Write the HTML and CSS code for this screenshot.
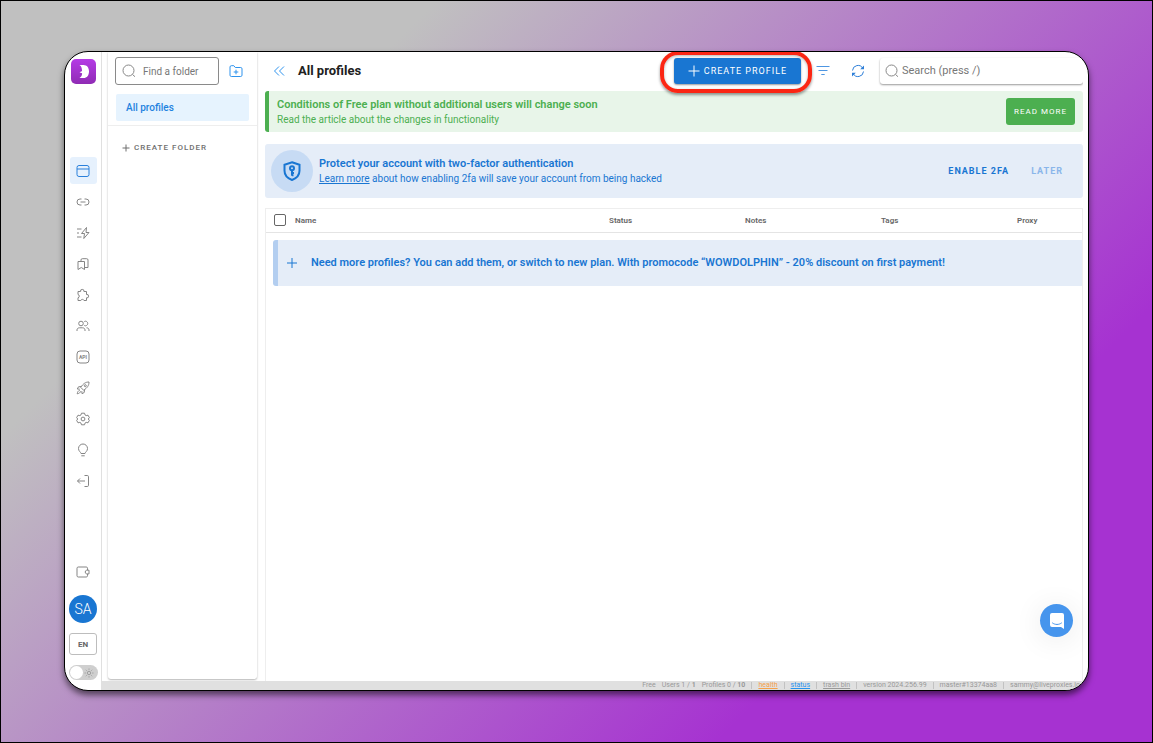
FILE: index.html
```html
<!DOCTYPE html>
<html lang="en">
<head>
<meta charset="utf-8">
<title>All profiles</title>
<link rel="stylesheet" href="styles.css">
</head>
<body>
<div class="backdrop">
<div class="window">
  <aside class="rail">
    <svg class="logo" viewBox="0 0 25 25" aria-label="Dolphin"><defs><linearGradient id="lg" x1="0" y1="0" x2="0" y2="1"><stop offset="0" stop-color="#b53be6"/><stop offset="1" stop-color="#8f2bb4"/></linearGradient></defs><rect width="25" height="25" rx="5" fill="url(#lg)"/><path d="M8.500 6h4c3.500 0 5.500 2.800 5.500 6.400S16 19 12.500 19H8.500c1.800-1 2.600-2.700 2.600-4.700-1.200-.3-2-.7-2.600-1.300 1 0 1.900-.4 2.500-.9.100-2.700-.6-4.800-2.500-6.100z" fill="#fff"/></svg>
    <nav class="nav">
      <a href="#" class="item active" aria-label="Profiles"><svg viewBox="0 0 14 14"><rect x="1" y="1.500" width="12" height="11" rx="2"/><path d="M1 5h12"/></svg></a>
      <a href="#" class="item" aria-label="Proxies"><svg viewBox="0 0 14 14"><path d="M5.500 4H4a3 3 0 0 0 0 6h1.500M8.500 4H10a3 3 0 0 1 0 6H8.500M4.500 7h5"/></svg></a>
      <a href="#" class="item" aria-label="Automation"><svg viewBox="0 0 14 14"><path d="M1 3h4.500M1 7h2M1 11h4.500M10.500 1.500L5.500 7.500h3L7.800 12.500l5.200-6h-3z"/></svg></a>
      <a href="#" class="item" aria-label="Bookmarks"><svg viewBox="0 0 14 14"><path d="M2 4.500h6.500v8L5.300 10.500 2 12.500zM5 4.500V3a1.300 1.300 0 0 1 1.300-1.300h4.400A1.300 1.300 0 0 1 12 3v7.500H8.500"/></svg></a>
      <a href="#" class="item" aria-label="Extensions"><svg viewBox="0 0 14 14"><path d="M2 3.500h2.600a1.700 1.700 0 1 1 3.300 0h2.600v3a1.700 1.700 0 1 1 0 3.300v2.700H8a1.700 1.700 0 0 0-3.200 0H2V9.800a1.700 1.700 0 0 0 0-3.300z"/></svg></a>
      <a href="#" class="item" aria-label="Team"><svg viewBox="0 0 14 14"><circle cx="5" cy="4.500" r="2.300"/><path d="M8.300 2.500a2.300 2.300 0 1 1 0 4M1 12v-1c0-1.300 1-2.200 2.400-2.200h3.200C8 8.800 9 9.700 9 11v1M10.500 8.800c1.600 0 2.500.9 2.500 2.200v1"/></svg></a>
      <a href="#" class="item" aria-label="API"><svg viewBox="0 0 14 14"><rect x="1" y="1" width="12" height="12" rx="3"/><text class="api" x="7" y="8.700" text-anchor="middle">API</text></svg></a>
      <a href="#" class="item" aria-label="Launch"><svg viewBox="0 0 14 14"><path d="M13 1c-3.500 0-5.500 1.500-8.300 5.300L7.700 9.300C11.500 6.500 13 4.500 13 1zM5.200 5.500l-2.700.3L1.300 8l2.500.2M8.500 8.800l-.3 2.700L6 12.700 5.800 10.200M3.700 9.500C2.300 9.500 1.500 11 1.200 12.800c1.800-.3 3.300-1.100 3.300-2.500"/><circle cx="9.300" cy="4.700" r="1"/></svg></a>
      <a href="#" class="item" aria-label="Settings"><svg viewBox="0 0 14 14"><circle cx="7" cy="7" r="1.900"/><path d="M5.500 1.200h3l.5 1.700 1.200.7 1.800-.4 1.400 2.500L12.200 7l1.200 1.300-1.400 2.500-1.800-.4-1.200.7-.5 1.700h-3L5 11.100l-1.200-.7-1.800.4L.6 8.300 1.800 7 .6 5.700 2 3.200l1.800.4L5 2.900z"/></svg></a>
      <a href="#" class="item" aria-label="Tips"><svg viewBox="0 0 14 14"><path d="M5 10.500C4.800 9 2.500 8.300 2.500 5.500a4.500 4.500 0 0 1 9 0C11.500 8.300 9.200 9 9 10.500zM5.300 12.800h3.400"/></svg></a>
      <a href="#" class="item" aria-label="Log out"><svg viewBox="0 0 14 14"><path d="M8.500 1.500h2.800A1.200 1.200 0 0 1 12.500 2.700v8.600a1.200 1.200 0 0 1-1.200 1.200H8.500M9 7H1.500M4 4.500L1.500 7 4 9.500"/></svg></a>
    </nav>
    <div class="account">
      <a href="#" class="item" aria-label="Wallet"><svg viewBox="0 0 14 14"><path d="M11.500 5V3.200c0-.7-.5-1.200-1.200-1.200H2.200C1.500 2 1 2.500 1 3.200v7.600c0 .7.500 1.200 1.200 1.200h8.100c.7 0 1.200-.5 1.200-1.200V9M13 5.200h-2.300a1.900 1.900 0 0 0 0 3.700H13z"/></svg></a>
      <button class="avatar">SA</button>
      <button class="lang">EN</button>
      <label class="switch"><input type="checkbox" aria-label="Dark theme"><span class="knob"></span><svg viewBox="0 0 10 10"><circle cx="5" cy="5" r="1.700"/><path d="M5 .5v1.300M5 8.200v1.300M.5 5h1.300M8.200 5h1.300M1.800 1.800l.9.900M7.300 7.300l.9.900M1.800 8.200l.9-.9M7.300 2.700l.9-.9"/></svg></label>
    </div>
  </aside>
  <div class="page">
    <div class="columns">
      <section class="folders">
        <div class="finder">
          <label class="find"><svg viewBox="0 0 14 14"><circle cx="6.500" cy="6.500" r="5.500"/><path d="M10.500 10.500L13 12.700"/></svg><input type="text" placeholder="Find a folder" aria-label="Find a folder"></label>
          <button class="ghost" aria-label="New folder"><svg viewBox="0 0 14 14"><path d="M1 3c0-.8.500-1.300 1.300-1.300h2.500L6.300 3.500h5.400c.8 0 1.300.5 1.300 1.300v6.400c0 .8-.5 1.300-1.300 1.300H2.300C1.500 12.500 1 12 1 11.200zM7 5.700v4.600M4.700 8h4.600"/></svg></button>
        </div>
        <a href="#" class="folder">All profiles</a>
        <button class="newfolder"><svg viewBox="0 0 8 8"><path d="M4 .5v7M.5 4h7"/></svg>CREATE FOLDER</button>
      </section>
      <main class="main">
        <header class="top">
          <button class="ghost back" aria-label="Collapse folders"><svg viewBox="0 0 12 12"><path d="M6 1.500L1.500 6 6 10.500M11 1.500L6.500 6l4.500 4.500"/></svg></button>
          <h1>All profiles</h1>
          <div class="create-wrap"><button class="create"><svg viewBox="0 0 12 12"><path d="M6 .5v11M.5 6h11"/></svg>CREATE PROFILE</button><span class="marker"></span></div>
          <button class="ghost filter" aria-label="Filter"><svg viewBox="0 0 14 14"><path d="M.5 2.500h13M2.500 6.500h9M5.300 10.500h3.400"/></svg></button>
          <button class="ghost refresh" aria-label="Refresh"><svg viewBox="0 0 14 14"><path d="M1.500 6.500A5.500 5.500 0 0 1 11.800 4.300M12.500 7.500A5.500 5.500 0 0 1 2.200 9.700"/><path class="solid" d="M13 1.500v3.800H9.200zM1 12.500V8.700h3.800z"/></svg></button>
          <label class="search"><svg viewBox="0 0 14 14"><circle cx="6.500" cy="6.500" r="5.500"/><path d="M10.500 10.500L13 12.700"/></svg><input type="text" placeholder="Search (press /)" aria-label="Search"></label>
        </header>
        <div class="notice">
          <div class="copy"><strong>Conditions of Free plan without additional users will change soon</strong><p>Read the article about the changes in functionality</p></div>
          <button class="read">READ MORE</button>
        </div>
        <div class="protect">
          <span class="badge"><svg viewBox="0 0 20 20"><path d="M10 1.200l7.500 2.600v6c0 4.500-3 7.500-7.500 9.200-4.500-1.700-7.500-4.700-7.500-9.200v-6z"/><circle cx="10" cy="7.300" r="2"/><path d="M10 9.300v5.500M10 12h2M10 14.300h1.500"/></svg></span>
          <div class="copy"><strong>Protect your account with two-factor authentication</strong><p><a href="#">Learn more</a> about how enabling 2fa will save your account from being hacked</p></div>
          <button class="text">ENABLE 2FA</button>
          <button class="text later">LATER</button>
        </div>
        <div class="list">
          <table>
            <thead><tr><th class="name"><label><input type="checkbox">Name</label></th><th>Status</th><th>Notes</th><th>Tags</th><th class="last">Proxy</th></tr></thead>
          </table>
          <a href="#" class="promo"><svg viewBox="0 0 12 12"><path d="M6 1v10M1 6h10"/></svg>Need more profiles? You can add them, or switch to new plan. With promocode “WOWDOLPHIN” - 20% discount on first payment!</a>
        </div>
      </main>
    </div>
    <footer class="status">
      <span>Free</span><span>Users 1 / <b>1</b></span><span>Profiles 0 / <b>10</b></span><i></i>
      <a href="#" class="health">health</a><i></i><a href="#" class="online">status</a><i></i><a href="#">trash bin</a><i></i>
      <span>version 2024.256.99</span><i></i><span>master#13374aa8</span><i></i><span>sammy@liveproxies.io</span>
    </footer>
  </div>
  <button class="chat" aria-label="Open chat"><svg viewBox="0 0 16 18"><path class="bubble" d="M3 1h10a2 2 0 0 1 2 2v14l-3-2H3a2 2 0 0 1-2-2V3a2 2 0 0 1 2-2z"/><path class="smile" d="M3.500 11c2.500 2 6.500 2 9 0"/></svg></button>
</div>
</div>
</body>
</html>
```
FILE: styles.css
```css
* { box-sizing: border-box; }
body { margin: 0; font-family: Roboto, "Liberation Sans", sans-serif; color: #666; }
button, input { font: inherit; color: inherit; }
button { border: 0; background: none; padding: 0; cursor: pointer; }
a { color: inherit; }
p, h1 { margin: 0; }
svg { display: block; flex: none; fill: none; stroke: currentColor; stroke-width: 1; }

.backdrop { display: flex; min-height: 100vh; padding: 50px 63px 51px; border: 1px solid #000; background: linear-gradient(135deg, #c0c0c0 23%, #a632d1 77%); }
.window { position: relative; display: flex; flex: 1; min-width: 0; overflow: hidden; border: 1px solid #000; border-radius: 24px; background: #fff; box-shadow: 0 4px 6px rgba(0, 0, 0, .55); }

.rail { display: flex; flex-direction: column; align-items: center; flex: none; width: 37px; padding: 7px 0 10px; border-right: 1px solid #e0e0e0; }
.logo { width: 25px; height: 25px; stroke: none; }
.nav { display: flex; flex-direction: column; gap: 4px; margin-top: 73px; }
.item { display: grid; place-items: center; width: 27px; height: 27px; border-radius: 3px; color: #858585; }
.item svg { width: 14px; height: 14px; }
.item.active { background: #e6f1fd; color: #2a80db; }
.api { font-size: 5px; font-weight: 700; fill: currentColor; stroke: none; }
.account { display: flex; flex-direction: column; align-items: center; gap: 10px; margin-top: auto; }
.avatar { width: 28px; height: 28px; border-radius: 50%; background: #1976d2; color: #fff; font-size: 14px; font-weight: 300; }
.lang { width: 28px; height: 22px; border: 1px solid #bdbdbd; border-radius: 3px; font-size: 8px; font-weight: 700; }
.switch { display: flex; align-items: center; justify-content: space-between; width: 29px; height: 15px; padding: 0 4px 0 1px; border-radius: 8px; background: #cfcfcf; }
.switch input { position: absolute; opacity: 0; }
.knob { width: 13px; height: 13px; border-radius: 50%; background: #fff; }
.switch svg { width: 10px; height: 10px; color: #a0a0a0; }

.page { display: flex; flex: 1; flex-direction: column; min-width: 0; }
.columns { display: flex; flex: 1; gap: 8px; padding: 0 5px 0 6px; }
.folders { flex: none; width: 149px; margin-bottom: 2px; border-radius: 0 0 3px 3px; box-shadow: 0 1px 2px rgba(0, 0, 0, .3); }
.finder { display: flex; align-items: center; padding: 5px 14px 0 7px; justify-content: space-between; }
.find { display: flex; align-items: center; gap: 7px; width: 104px; height: 28px; padding: 0 6px; border: 1px solid #8a8a8a; border-radius: 3px; color: #858585; }
.find svg, .search svg { width: 14px; height: 14px; color: #888; }
.find input, .search input { flex: 1; width: 0; min-width: 0; padding: 0; border: 0; outline: 0; background: none; }
.find input { font-size: 10px; }
input::placeholder { color: #777; opacity: 1; }
.ghost { color: #2e93ed; }
.ghost svg { width: 14px; height: 14px; }
.folder { display: block; margin: 9px 8px 4px; padding: 0 10px; border-radius: 2px; background: #e6f3fe; color: #1e82e0; font-size: 10px; font-weight: 500; line-height: 27px; text-decoration: none; }
.newfolder { display: flex; align-items: center; gap: 4px; width: 100%; height: 44px; padding-left: 14px; border-top: 1px solid #eee; font-size: 8px; font-weight: 500; letter-spacing: 1px; color: #6f6f6f; }
.newfolder svg { width: 8px; height: 8px; }

.main { display: flex; flex: 1; flex-direction: column; min-width: 0; }
.top { display: flex; align-items: center; height: 39px; padding-bottom: 2px; }
.back { margin: 0 13px 0 8px; }
.ghost.back svg { width: 12px; height: 12px; }
h1 { flex: 1; color: #212121; font-size: 13px; font-weight: 700; line-height: 18px; }
.create-wrap { position: relative; }
.create { display: flex; align-items: center; justify-content: center; gap: 4px; width: 127px; height: 26px; border-radius: 3px; background: #1976d2; color: #fff; font-size: 9px; letter-spacing: 1px; box-shadow: 0 1px 2px rgba(0, 0, 0, .4); }
.create svg { width: 12px; height: 12px; }
.marker { position: absolute; inset: -7px -11px -9px -14px; border: 4px solid #fb2614; border-radius: 18px; box-shadow: 0 2px 3px rgba(0, 0, 0, .4), inset 0 1px 3px rgba(0, 0, 0, .3); pointer-events: none; }
.filter { margin-left: 15px; color: #4e96e2; }
.refresh { margin: 0 15px 0 21px; color: #2e7fd8; }
.solid { fill: currentColor; stroke: none; }
.search { display: flex; align-items: center; gap: 3px; width: 203px; height: 26px; padding: 0 6px 0 5px; border-radius: 3px; font-size: 11px; box-shadow: 0 1px 2px rgba(0, 0, 0, .4); clip-path: inset(-2px 0 -4px -4px); }

.copy { flex: 1; }
.copy strong, .promo { display: block; font-size: 11px; font-weight: 600; line-height: 15px; }
.copy p { font-size: 10px; line-height: 15px; }
.notice { display: flex; align-items: center; min-height: 41px; padding: 0 8px; border-left: 4px solid #4caf50; border-radius: 3px; background: #e8f5e9; color: #4caf50; }
.read { width: 69px; height: 27px; border-radius: 3px; background: #4caf50; color: #fff; font-size: 8px; letter-spacing: 1px; }
.protect { display: flex; align-items: center; min-height: 54px; margin-top: 12px; padding: 0 20px 0 6px; border-radius: 3px; background: #e5edf8; color: #1976d2; }
.badge { display: grid; place-items: center; width: 42px; height: 42px; margin-right: 6px; border-radius: 50%; background: #c7dbf4; }
.badge svg { width: 20px; height: 20px; stroke-width: 2; }
.text { margin-left: 22px; font-size: 9px; font-weight: 700; letter-spacing: 1px; }
.later { color: #8ab6ea; }

.list { flex: 1; margin-top: 10px; border: 1px solid #eee; border-bottom: 0; }
table { width: 100%; table-layout: fixed; border-collapse: collapse; border-bottom: 1px solid #e4e4e4; }
th { width: 136px; height: 23px; padding: 0; font-size: 8px; font-weight: 600; text-align: left; }
th.name { width: auto; }
th.last { width: 65px; }
th label { display: flex; align-items: center; gap: 9px; padding-left: 8px; }
th input { appearance: none; width: 12px; height: 12px; margin: 0; border: 1px solid #666; border-radius: 2px; }
.promo { display: flex; align-items: center; gap: 13px; min-height: 46px; margin: 7px 0 0 7px; padding-left: 8px; border-left: 5px solid #b3cef0; border-radius: 3px 0 0 3px; background: #e5edf8; color: #1976d2; text-decoration: none; }
.promo svg { width: 12px; height: 12px; }

.status { display: flex; align-items: center; justify-content: flex-end; gap: 6px; height: 9px; padding-right: 8px; overflow: hidden; background: #e0e0e0; color: #999; font-size: 7px; line-height: 9px; white-space: nowrap; }
.status i { width: 1px; height: 7px; background: #c2c2c2; }
.status .health { color: #f5a04a; }
.status .online { color: #2792ef; }
.chat { position: absolute; right: 15px; bottom: 53px; display: grid; place-items: center; width: 33px; height: 33px; border-radius: 50%; background: #4695ed; box-shadow: 0 3px 30px rgba(0, 0, 0, .09); }
.chat svg { width: 16px; height: 18px; }
.bubble { fill: #fff; stroke: none; }
.smile { stroke: #4695ed; stroke-linecap: round; }
```
